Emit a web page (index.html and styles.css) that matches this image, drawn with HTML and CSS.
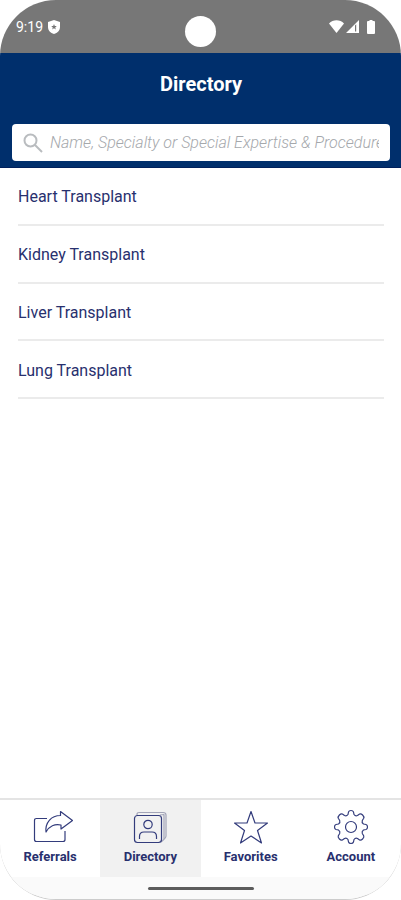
FILE: index.html
```html
<!DOCTYPE html>
<html lang="en">
<head>
    <meta charset="UTF-8">
    <title>Directory</title>
    <meta name="viewport" content="width=device-width, initial-scale=1.0">
    <link rel="stylesheet" href="styles.css">
</head>
<body>
    <div class="phone">
        <div class="status-bar">
            <div class="status-left">
                <span>9:19</span>
                <svg width="12" height="14" viewBox="0 0 12 14">
                    <path fill="#fff" fill-rule="evenodd" d="M6 0L12 2V7C12 10.500 9.500 13 6 14C2.500 13 0 10.500 0 7V2ZM6 4L5.200 6L3.200 6.100L4.800 7.400L4.200 9.400L6 8.300L7.800 9.400L7.200 7.400L8.800 6.100L6.800 6Z"/>
                </svg>
            </div>
            <div class="camera"></div>
            <div class="status-right">
                <svg width="15" height="13" viewBox="0 0 15 13">
                    <path fill="#fff" d="M0 3.500C4 -.8 11 -.8 15 3.500L7.500 13Z"/>
                </svg>
                <svg width="13" height="13" viewBox="0 0 13 13">
                    <path fill="#fff" fill-rule="evenodd" d="M13 0V13H0ZM9 5.500V11.500H10.200V4.300Z"/>
                </svg>
                <svg class="battery" width="8" height="14" viewBox="0 0 8 14">
                    <path fill="#fff" d="M2.500 0H5.500V1H7Q8 1 8 2V13Q8 14 7 14H1Q0 14 0 13V2Q0 1 1 1H2.500Z"/>
                </svg>
            </div>
        </div>

        <header class="header">
            <h1>Directory</h1>
            <label class="search">
                <svg width="20" height="20" viewBox="0 0 20 20" fill="none" stroke="#b9bcbf" stroke-width="2">
                    <circle cx="7.500" cy="7.500" r="6"/>
                    <path d="M12 12L19 19"/>
                </svg>
                <input type="text" aria-label="Search" placeholder="Name, Specialty or Special Expertise &amp; Procedure">
            </label>
        </header>

        <main class="content">
            <ul class="list">
                <li><a href="#">Heart Transplant</a></li>
                <li><a href="#">Kidney Transplant</a></li>
                <li><a href="#">Liver Transplant</a></li>
                <li><a href="#">Lung Transplant</a></li>
            </ul>
        </main>

        <nav class="tabs">
            <a href="#">
                <svg width="40" height="36" viewBox="0 0 40 36">
                    <path d="M17 9.500H6.500Q4.500 9.500 4.500 11.500V30.500Q4.500 32.500 6.500 32.500H33Q35 32.500 35 30.500V22"/>
                    <path d="M30.500 2.500L42.500 11.500L31 20V16C25 14.500 19 17 16 23C15 14 21 6.500 30.500 6.500Z"/>
                </svg>
                <span>Referrals</span>
            </a>
            <a href="#" class="active">
                <svg width="40" height="36" viewBox="0 0 40 36">
                    <g class="back">
                        <path d="M7 6V5.500Q7 3.500 9 3.500H33Q36 3.500 36 6V27Q36 29 31 33"/>
                        <path d="M30 6L34 5.500V30"/>
                    </g>
                    <rect x="4.500" y="6.500" width="27" height="27" rx="3"/>
                    <circle cx="18" cy="15.500" r="4.200"/>
                    <path d="M9.500 30V27.500Q9.500 23 14 23H22Q26.500 23 26.500 27.500V30"/>
                </svg>
                <span>Directory</span>
            </a>
            <a href="#">
                <svg width="40" height="36" viewBox="0 0 40 36">
                    <path d="M20 2.500L24 14H36.500L26.500 21.500L30.500 34L20 27L9.500 34L13.500 21.500L3.500 14H16Z"/>
                </svg>
                <span>Favorites</span>
            </a>
            <a href="#">
                <svg width="40" height="36" viewBox="0 0 40 36">
                    <g transform="translate(20 18)">
                        <path d="M-2.500 -15Q-2 -16.500 0 -16.500Q2 -16.500 2.500 -15L3 -12.500Q4.500 -10.500 6.500 -11.500L8.600 -13Q10 -13.600 11.600 -12Q13.400 -10.200 12.700 -8.800L11.300 -6.500Q10.500 -4.500 12.500 -3L15 -2.500Q16.500 -2 16.500 0Q16.500 2 15 2.500L12.500 3Q10.500 4.500 11.300 6.500L12.700 8.800Q13.400 10.200 11.600 12Q10 13.600 8.600 13L6.500 11.500Q4.500 10.500 3 12.500L2.500 15Q2 16.500 0 16.500Q-2 16.500 -2.500 15L-3 12.500Q-4.500 10.500 -6.500 11.500L-8.600 13Q-10 13.600 -11.600 12Q-13.400 10.200 -12.700 8.800L-11.300 6.500Q-10.500 4.500 -12.500 3L-15 2.500Q-16.500 2 -16.500 0Q-16.500 -2 -15 -2.500L-12.500 -3Q-10.500 -4.500 -11.300 -6.500L-12.700 -8.800Q-13.400 -10.200 -11.600 -12Q-10 -13.600 -8.600 -13L-6.500 -11.500Q-4.500 -10.500 -3 -12.500Z"/>
                        <circle r="5.500"/>
                    </g>
                </svg>
                <span>Account</span>
            </a>
        </nav>

        <div class="home-area">
            <div class="home-bar"></div>
        </div>
    </div>
</body>
</html>
```
FILE: styles.css
```css
:root {
    --navy: #002f6c;
    --ink: #28306e;
    --line: #e4e4e4;
}

* {
    box-sizing: border-box;
}

body {
    margin: 0;
    font-family: Roboto, sans-serif;
    background: #fff;
    color: var(--ink);
}

a {
    color: inherit;
    text-decoration: none;
}

.phone {
    display: flex;
    flex-direction: column;
    min-height: 100vh;
    border-bottom: 1px solid #ccc;
    border-radius: 56px;
    overflow: hidden;
}

.status-bar {
    display: grid;
    grid-template-columns: 1fr auto 1fr;
    align-items: center;
    height: 53px;
    padding: 0 26px 0 16px;
    background: #777;
    color: #fff;
    font-size: 14px;
}

.status-left,
.status-right {
    display: flex;
    align-items: center;
    gap: 5px;
}

.status-right {
    justify-content: flex-end;
    gap: 2px;
}

.battery {
    margin-left: 6px;
}

.camera {
    width: 31px;
    height: 31px;
    margin: 10px 0 0 10px;
    border-radius: 50%;
    background: #fff;
}

.header {
    height: 115px;
    padding: 18px 11px 0 12px;
    background: var(--navy);
    border-bottom: 1px solid #00205c;
}

h1 {
    margin: 0 0 27px;
    text-align: center;
    color: #fff;
    font-size: 20px;
    line-height: 26px;
    font-weight: 700;
}

.search {
    display: flex;
    align-items: center;
    gap: 7px;
    height: 37px;
    padding: 0 11px;
    background: #fff;
    border-radius: 4px;
}

.search svg {
    flex: none;
}

.search input {
    flex: 1;
    min-width: 0;
    padding: 0;
    border: none;
    outline: none;
    background: none;
    font: italic 300 16px Roboto, sans-serif;
    color: var(--ink);
}

.search input::placeholder {
    color: #a5a8ac;
}

.content {
    flex: 1;
    padding: 0 17px 0 18px;
}

.list {
    display: grid;
    grid-auto-rows: 1fr;
    height: 231px;
    margin: 0;
    padding: 0;
    list-style: none;
}

.list li {
    display: flex;
    align-items: center;
    padding-top: 2px;
    border-bottom: 2px solid #ebebeb;
}

.list a {
    flex: 1;
    font-size: 16px;
}

.tabs {
    display: grid;
    grid-template-columns: repeat(4, 1fr);
    height: 79px;
    border-top: 2px solid var(--line);
}

.tabs a {
    display: flex;
    flex-direction: column;
    align-items: center;
    gap: 4px;
    padding-top: 9px;
    font-size: 13px;
    line-height: 16px;
    font-weight: 700;
}

.tabs .active {
    background: #f1f1f1;
}

.tabs svg {
    fill: none;
    stroke: #333c7c;
    stroke-width: 1.2;
    stroke-linejoin: round;
    overflow: visible;
}

.tabs .back {
    stroke: #a3a5b8;
}

.home-area {
    display: flex;
    justify-content: center;
    height: 22px;
    padding-top: 10px;
    background: #fafafa;
}

.home-bar {
    width: 106px;
    height: 3px;
    border-radius: 2px;
    background: #5c5c5c;
}
```
